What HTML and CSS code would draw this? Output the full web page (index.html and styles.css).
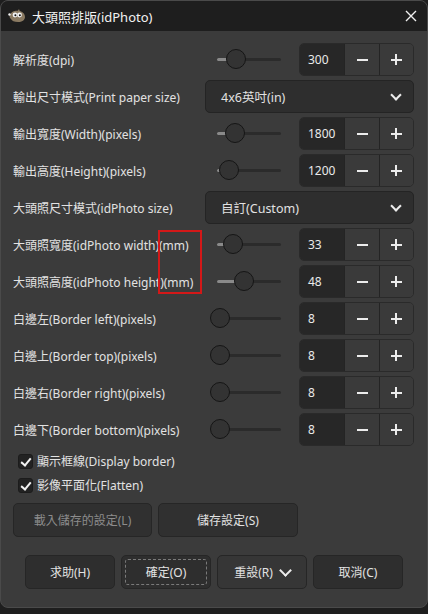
FILE: index.html
```html
<!DOCTYPE html>
<html lang="zh-Hant">
<head>
  <meta charset="UTF-8">
  <meta name="viewport" content="width=device-width, initial-scale=1.0">
  <title>大頭照排版(idPhoto)</title>
  <link rel="stylesheet" href="styles.css">
</head>
<body>
  <div class="window">
    <header class="titlebar">
      <svg class="app-icon" width="18" height="14" viewBox="0 0 18 14">
        <path d="M2 6 C3 2 8 1 12 2 C15 3 17 5 17 8 C17 11 14 13 10 13 C6 13 4 12 3 10 C2 9 1 8 2 6 Z" fill="#8a7a62"/>
        <path d="M9 3 L11 0 L12 3 Z" fill="#8a7a62"/>
        <circle cx="7" cy="6" r="2.4" fill="#f2f2f2"/>
        <circle cx="11.5" cy="6" r="2.4" fill="#f2f2f2"/>
        <circle cx="7.4" cy="6.2" r="1" fill="#111"/>
        <circle cx="11.9" cy="6.2" r="1" fill="#111"/>
        <circle cx="1.5" cy="5.5" r="1.2" fill="#f2f2f2"/>
      </svg>
      <span class="title">大頭照排版(idPhoto)</span>
      <svg class="close" width="12" height="12" viewBox="0 0 12 12">
        <path d="M1 1 L11 11 M11 1 L1 11" stroke="#f0f0f0" stroke-width="1.4"/>
      </svg>
    </header>

    <main class="content">
      <div class="form">
        <span class="label">解析度(dpi)</span>
        <div class="control">
          <div class="slider"><div class="track" style="--at: 19px"><div class="fill"></div><div class="knob"></div></div></div>
          <div class="spin"><span class="value">300</span><span class="btn minus"></span><span class="btn plus"></span></div>
        </div>

        <span class="label">輸出尺寸模式(Print paper size)</span>
        <div class="combo"><span>4x6英吋(in)</span><span class="chevron"></span></div>

        <span class="label">輸出寬度(Width)(pixels)</span>
        <div class="control">
          <div class="slider"><div class="track" style="--at: 18px"><div class="fill"></div><div class="knob"></div></div></div>
          <div class="spin"><span class="value">1800</span><span class="btn minus"></span><span class="btn plus"></span></div>
        </div>

        <span class="label">輸出高度(Height)(pixels)</span>
        <div class="control">
          <div class="slider"><div class="track" style="--at: 12px"><div class="fill"></div><div class="knob"></div></div></div>
          <div class="spin"><span class="value">1200</span><span class="btn minus"></span><span class="btn plus"></span></div>
        </div>

        <span class="label">大頭照尺寸模式(idPhoto size)</span>
        <div class="combo"><span>自訂(Custom)</span><span class="chevron"></span></div>

        <span class="label">大頭照寬度(idPhoto width)(mm)</span>
        <div class="control">
          <div class="slider"><div class="track" style="--at: 16px"><div class="fill"></div><div class="knob"></div></div></div>
          <div class="spin"><span class="value">33</span><span class="btn minus"></span><span class="btn plus"></span></div>
        </div>

        <span class="label">大頭照高度(idPhoto height)(mm)</span>
        <div class="control">
          <div class="slider"><div class="track" style="--at: 27px"><div class="fill"></div><div class="knob"></div></div></div>
          <div class="spin"><span class="value">48</span><span class="btn minus"></span><span class="btn plus"></span></div>
        </div>

        <span class="label">白邊左(Border left)(pixels)</span>
        <div class="control">
          <div class="slider"><div class="track" style="--at: 3px"><div class="fill"></div><div class="knob"></div></div></div>
          <div class="spin"><span class="value">8</span><span class="btn minus"></span><span class="btn plus"></span></div>
        </div>

        <span class="label">白邊上(Border top)(pixels)</span>
        <div class="control">
          <div class="slider"><div class="track" style="--at: 3px"><div class="fill"></div><div class="knob"></div></div></div>
          <div class="spin"><span class="value">8</span><span class="btn minus"></span><span class="btn plus"></span></div>
        </div>

        <span class="label">白邊右(Border right)(pixels)</span>
        <div class="control">
          <div class="slider"><div class="track" style="--at: 3px"><div class="fill"></div><div class="knob"></div></div></div>
          <div class="spin"><span class="value">8</span><span class="btn minus"></span><span class="btn plus"></span></div>
        </div>

        <span class="label">白邊下(Border bottom)(pixels)</span>
        <div class="control">
          <div class="slider"><div class="track" style="--at: 3px"><div class="fill"></div><div class="knob"></div></div></div>
          <div class="spin"><span class="value">8</span><span class="btn minus"></span><span class="btn plus"></span></div>
        </div>
      </div>

      <div class="checks">
        <label class="check"><span class="box"></span>顯示框線(Display border)</label>
        <label class="check"><span class="box"></span>影像平面化(Flatten)</label>
      </div>

      <div class="settings">
        <button class="button disabled">載入儲存的設定(L)</button>
        <button class="button">儲存設定(S)</button>
      </div>
    </main>

    <footer class="actions">
      <button class="button">求助(H)</button>
      <button class="button focused"><span>確定(O)</span></button>
      <button class="button menu">重設(R)<span class="chevron"></span></button>
      <button class="button">取消(C)</button>
    </footer>

    <!-- highlight box around the unit suffix -->
    <div class="mark"></div>
  </div>
</body>
</html>
```

FILE: styles.css
```css
:root {
  --bg: #3b3b3b;
  --title: #1e1e1e;
  --text: #e2e2e2;
  --entry: #272727;
  --btn: #3a3a3a;
  --edge: #2a2a2a;
}

* {
  margin: 0;
  padding: 0;
  box-sizing: border-box;
}

body {
  background: #1e1e1e;
  font-family: "Noto Sans", "Noto Sans CJK TC", sans-serif;
  font-size: 12px;
  color: var(--text);
}

.window {
  position: relative;
  width: 428px;
  height: 608px;
  background: var(--bg);
  border: 1px solid #4a4a4a;
  border-radius: 8px;
  overflow: hidden;
  display: flex;
  flex-direction: column;
}

.titlebar {
  height: 30px;
  background: var(--title);
  display: flex;
  align-items: center;
  padding: 0 9px 0 7px;
}

.app-icon {
  margin-right: 6px;
}

.title {
  flex: 1;
  font-size: 13px;
  color: #f2f2f2;
}

.close {
  margin-right: 1px;
}

.content {
  padding: 12px 13px 0 12px;
}

.form {
  display: grid;
  grid-template-columns: 1fr 209px;
  grid-auto-rows: 33px;
  row-gap: 4px;
  align-items: center;
}

.label {
  white-space: nowrap;
}

.control {
  display: flex;
  height: 100%;
}

/* slider: track with lighter filled part and round knob */
.slider {
  width: 94px;
  display: flex;
  align-items: center;
  padding-left: 12px;
}

.track {
  position: relative;
  width: 64px;
  height: 3px;
  background: #2b2b2b;
  border-radius: 2px;
}

.fill {
  width: var(--at);
  height: 100%;
  background: #8a8a8a;
  border-radius: 2px;
}

.knob {
  position: absolute;
  top: -9px;
  left: calc(var(--at) - 10px);
  width: 20px;
  height: 20px;
  border-radius: 50%;
  background: #333;
  border: 1px solid #151515;
}

.spin {
  width: 115px;
  display: flex;
  border: 1px solid var(--edge);
  border-radius: 5px;
  overflow: hidden;
}

.value {
  width: 44px;
  background: var(--entry);
  display: flex;
  align-items: center;
  padding-left: 8px;
  color: #eaeaea;
}

.btn {
  position: relative;
  flex: 1;
  background: var(--btn);
  border-left: 1px solid #242424;
}

.btn::before,
.plus::after {
  content: "";
  position: absolute;
  left: 50%;
  top: 50%;
  width: 11px;
  height: 2px;
  margin: -1px 0 0 -5px;
  background: #ececec;
}

.plus::after {
  width: 2px;
  height: 11px;
  margin: -5.5px 0 0 -1px;
}

.combo {
  height: 100%;
  background: #2e2e2e;
  border: 1px solid #242424;
  border-radius: 5px;
  display: flex;
  align-items: center;
  justify-content: space-between;
  padding: 0 13px 0 15px;
  font-size: 12.5px;
}

.chevron {
  width: 8px;
  height: 8px;
  border-right: 2px solid #ececec;
  border-bottom: 2px solid #ececec;
  transform: translateY(-2px) rotate(45deg);
}

.checks {
  margin-top: 3px;
}

.check {
  height: 24px;
  display: flex;
  align-items: center;
  padding-left: 5px;
}

.box {
  position: relative;
  flex: none;
  width: 15px;
  height: 15px;
  margin-right: 4px;
  background: #222;
  border: 1px solid #1c1c1c;
  border-radius: 3px;
}

.box::after {
  content: "";
  position: absolute;
  left: 4px;
  top: 1px;
  width: 4px;
  height: 8px;
  border-right: 2px solid #f2f2f2;
  border-bottom: 2px solid #f2f2f2;
  transform: rotate(40deg);
}

.button {
  height: 34px;
  background: #2e2e2e;
  border: 1px solid #262626;
  border-radius: 5px;
  color: var(--text);
  font: inherit;
  display: flex;
  align-items: center;
  justify-content: center;
}

.settings {
  display: flex;
  gap: 6px;
  margin-top: 6px;
}

.settings .button {
  width: 140px;
  background: #303030;
}

.settings .disabled {
  width: 139px;
  color: #8c8c8c;
}

.actions {
  display: flex;
  justify-content: center;
  gap: 6px;
  margin-top: 18px;
}

.actions .button {
  width: 90px;
}

.focused {
  padding: 3px;
}

.focused span {
  flex: 1;
  align-self: stretch;
  display: flex;
  align-items: center;
  justify-content: center;
  border: 1px dashed #7a7a7a;
  border-radius: 3px;
}

.menu {
  background: #363636;
  gap: 8px;
}

.menu .chevron {
  width: 9px;
  height: 9px;
}

.mark {
  position: absolute;
  left: 157px;
  top: 229px;
  width: 44px;
  height: 64px;
  border: 2px solid #d31818;
}
```
